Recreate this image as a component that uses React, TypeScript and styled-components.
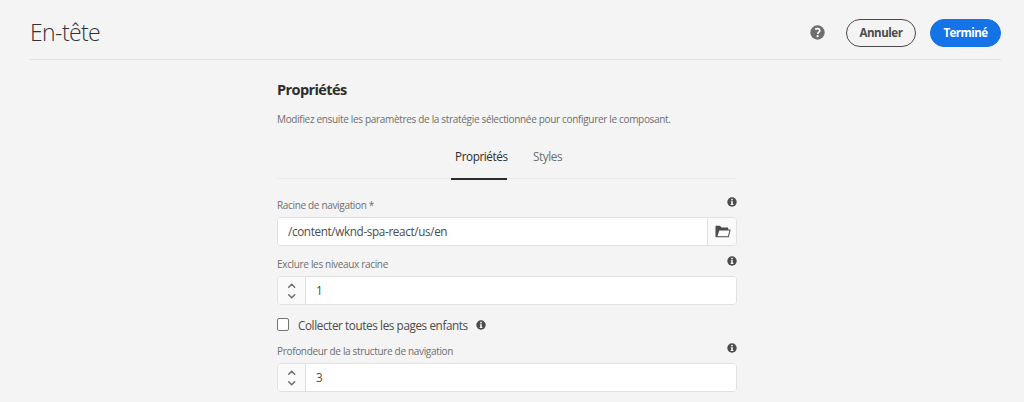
import React from "react";
import styled, { createGlobalStyle } from "styled-components";

const GlobalStyle = createGlobalStyle`
  * { box-sizing: border-box; }
  body {
    margin: 0;
    background: #f4f4f4;
    color: #4b4b4b;
    font-family: "Open Sans", "Noto Sans", sans-serif;
    overflow: hidden;
  }
  button, input { font: inherit; color: inherit; }
`;

const Page = styled.div`
  height: 402px;
  padding: 0 23px 0 30px;
  overflow: hidden;
`;

const Header = styled.header`
  display: flex;
  align-items: center;
  height: 60px;
  padding-top: 6px;
  border-bottom: 1px solid #e1e1e1;
`;

const Title = styled.h1`
  flex: 1;
  margin: 0;
  font-size: 23px;
  line-height: 28px;
  padding-bottom: 1px;
  letter-spacing: -0.6px;
  font-weight: 300;
  color: #323232;
`;

const Help = styled.span`
  display: flex;
  margin-right: 21px;
`;

const Button = styled.button<{ $primary?: boolean }>`
  height: 28px;
  width: ${(p) => (p.$primary ? 71 : 70)}px;
  margin-left: ${(p) => (p.$primary ? 14 : 0)}px;
  padding: 0;
  border: 1px solid ${(p) => (p.$primary ? "#1473e6" : "#4b4b4b")};
  border-radius: 14px;
  background: ${(p) => (p.$primary ? "#1473e6" : "transparent")};
  color: ${(p) => (p.$primary ? "#fff" : "#4b4b4b")};
  font-size: 11.5px;
  line-height: 26px;
  letter-spacing: ${(p) => (p.$primary ? -0.55 : -0.45)}px;
  font-weight: 700;
`;

const Content = styled.main`
  width: 460px;
  margin-left: 247px;
  padding-top: 18px;
`;

const Heading = styled.h2`
  margin: 0;
  font-size: 14.5px;
  line-height: 24px;
  letter-spacing: -0.58px;
  font-weight: 700;
  color: #2c2c2c;
`;

const Description = styled.p`
  margin: 8px 0 0;
  font-size: 10px;
  line-height: 18px;
  letter-spacing: -0.325px;
  color: #6e6e6e;
  white-space: nowrap;
`;

const Tabs = styled.nav`
  display: flex;
  height: 30px;
  margin-top: 21px;
  padding-left: 174px;
  border-bottom: 1px solid #eaeaea;
`;

const Tab = styled.a<{ $active?: boolean }>`
  height: 31px;
  width: 56px;
  margin-right: 22px;
  padding-left: 4px;
  font-size: 11.7px;
  line-height: 14px;
  letter-spacing: -0.4px;
  white-space: nowrap;
  color: ${(p) => (p.$active ? "#2c2c2c" : "#6e6e6e")};
  border-bottom: 2px solid ${(p) => (p.$active ? "#2c2c2c" : "transparent")};
`;

const Field = styled.div`
  height: 59px;
`;

const LabelRow = styled.div`
  display: flex;
  justify-content: space-between;
  align-items: flex-start;
  height: 20px;
`;

const Label = styled.label`
  font-size: 10px;
  line-height: 16px;
  letter-spacing: -0.33px;
  color: #6e6e6e;
`;

const Control = styled.div`
  display: flex;
  height: 29px;
  border: 1px solid #e1e1e1;
  border-radius: 4px;
  background: #fff;
  overflow: hidden;
`;

const Input = styled.input`
  flex: 1;
  min-width: 0;
  padding: 0 10px 2px;
  border: 0;
  outline: 0;
  background: #fff;
  font-size: 11.7px;
  letter-spacing: -0.35px;
  color: #4b4b4b;
`;

const Browse = styled.button`
  display: flex;
  align-items: center;
  justify-content: center;
  width: 29px;
  padding: 0 0 0 2px;
  border: 0;
  border-left: 1px solid #e1e1e1;
  background: #fafafa;
`;

const Stepper = styled.div`
  display: flex;
  flex-direction: column;
  align-items: center;
  justify-content: center;
  gap: 6px;
  width: 28px;
  border-right: 1px solid #e1e1e1;
  background: #fafafa;
`;

const CheckRow = styled.label`
  display: flex;
  align-items: center;
  height: 28px;
  padding-bottom: 9px;
  font-size: 11.7px;
  letter-spacing: -0.39px;
`;

const Box = styled.span`
  width: 12px;
  height: 13px;
  margin-right: 9px;
  border: 1px solid #747474;
  border-radius: 2px;
  background: #fff;
`;

const CheckText = styled.span`
  width: 178px;
  white-space: nowrap;
`;

const Fields = styled.div`
  padding-top: 18px;
`;

const Info = () => (
  <svg width="10" height="10" viewBox="0 0 10 10">
    <circle cx="5" cy="5" r="4.7" fill="#4b4b4b" />
    <circle cx="5" cy="2.6" r="0.9" fill="#fff" />
    <path d="M3.8 4.2h2v2.9h.6v.9H3.7v-.9h.5V5.1h-.4z" fill="#fff" />
  </svg>
);

const Chevron = ({ down }: { down?: boolean }) => (
  <svg width="8" height="5" viewBox="0 0 8 5" fill="none" stroke="#6e6e6e" strokeWidth="1.5" strokeLinecap="round" strokeLinejoin="round">
    <path d={down ? "M.7 .8 3.7 3.8 6.7 .8" : "M.7 4.2 3.7 1.2 6.7 4.2"} />
  </svg>
);

const Folder = () => (
  <svg width="16" height="13" viewBox="0 0 16 13">
    <path d="M.5 12V1.4Q.5 .8 1 .8H5l1.5 1.7h6.2q.5 0 .5.5V4.5h2q.6 0 .4.6L13.7 12.2H.8z" fill="#4b4b4b" />
    <path d="M4.3 5.4h10.2l-1.6 5.9H2.4z" fill="#fafafa" />
  </svg>
);

const NumberField = ({ label, value }: { label: string; value: string }) => (
  <Field>
    <LabelRow>
      <Label>{label}</Label>
      <Info />
    </LabelRow>
    <Control>
      <Stepper>
        <Chevron />
        <Chevron down />
      </Stepper>
      <Input defaultValue={value} />
    </Control>
  </Field>
);

export default function App() {
  return (
    <Page>
      <GlobalStyle />
      <Header>
        <Title>En-tête</Title>
        <Help>
          <svg width="15" height="15" viewBox="0 0 15 15">
            <circle cx="7.5" cy="7.5" r="7.2" fill="#6e6e6e" />
            <path d="M5.1 4.4C6.8 3 9.8 3.3 9.8 5.5 9.8 7.1 7.7 7.3 7.7 9" fill="none" stroke="#fff" strokeWidth="1.7" />
            <circle cx="7.6" cy="11.2" r="1.1" fill="#fff" />
          </svg>
        </Help>
        <Button>Annuler</Button>
        <Button $primary>Terminé</Button>
      </Header>
      <Content>
        <Heading>Propriétés</Heading>
        <Description>Modifiez ensuite les paramètres de la stratégie sélectionnée pour configurer le composant.</Description>
        <Tabs>
          <Tab $active>Propriétés</Tab>
          <Tab>Styles</Tab>
        </Tabs>
        <Fields>
          <Field>
            <LabelRow>
              <Label>Racine de navigation *</Label>
              <Info />
            </LabelRow>
            <Control>
              <Input defaultValue="/content/wknd-spa-react/us/en" />
              <Browse aria-label="Parcourir">
                <Folder />
              </Browse>
            </Control>
          </Field>
          <NumberField label="Exclure les niveaux racine" value="1" />
          <CheckRow>
            <Box />
            <CheckText>Collecter toutes les pages enfants</CheckText>
            <Info />
          </CheckRow>
          <NumberField label="Profondeur de la structure de navigation" value="3" />
        </Fields>
      </Content>
    </Page>
  );
}
